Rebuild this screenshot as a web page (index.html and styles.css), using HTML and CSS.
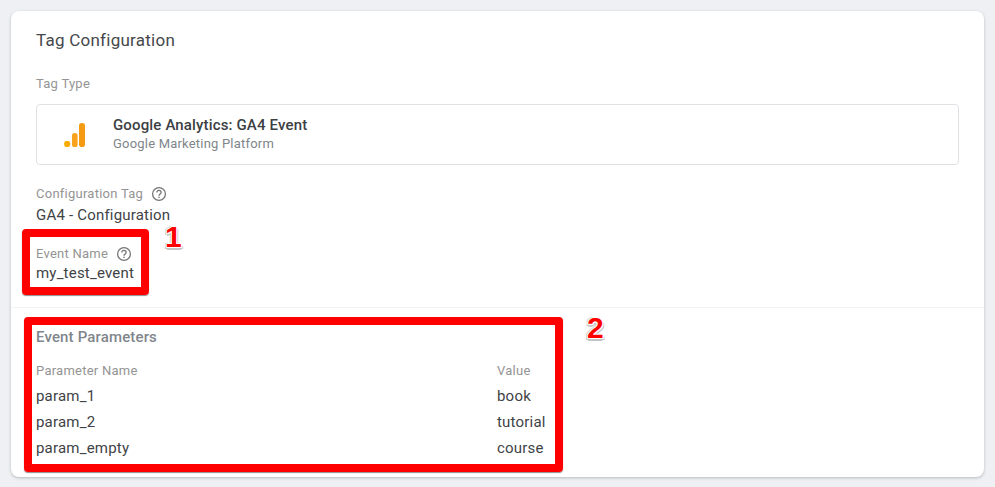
FILE: index.html
```html
<!DOCTYPE html>
<html lang="en">
<head>
<meta charset="utf-8">
<title>Tag Configuration</title>
<link rel="stylesheet" href="styles.css">
</head>
<body>
<main class="card">
  <section class="top">
    <h1 class="title">Tag Configuration</h1>
    <div class="label type-label">Tag Type</div>
    <div class="type-box">
      <svg class="ga-icon" viewBox="0 0 24 24" width="24" height="24" aria-hidden="true">
        <rect x="1.2" y="18" width="6" height="6" rx="2.2" fill="#f9ab00"/>
        <rect x="9" y="10" width="5.6" height="14" rx="2.6" fill="#f9a21b"/>
        <rect x="16" y="0" width="6" height="24" rx="2.8" fill="#f59a13"/>
      </svg>
      <div class="type-text">
        <div class="type-name">Google Analytics: GA4 Event</div>
        <div class="type-sub">Google Marketing Platform</div>
      </div>
    </div>
    <div class="label help-row config-label">Configuration Tag
      <svg class="help" viewBox="0 0 24 24" aria-hidden="true"><circle cx="12" cy="12" r="9.6" fill="none" stroke="#757575" stroke-width="1.9"/><path d="M8.8 9.6a3.2 3.2 0 0 1 6.4 0c0 2.3-3.2 2.5-3.2 5" fill="none" stroke="#757575" stroke-width="1.9"/><rect x="11" y="16" width="2" height="2" fill="#757575"/></svg>
    </div>
    <div class="value">GA4 - Configuration</div>
    <div class="label help-row event-label">Event Name
      <svg class="help" viewBox="0 0 24 24" aria-hidden="true"><circle cx="12" cy="12" r="9.6" fill="none" stroke="#757575" stroke-width="1.9"/><path d="M8.8 9.6a3.2 3.2 0 0 1 6.4 0c0 2.3-3.2 2.5-3.2 5" fill="none" stroke="#757575" stroke-width="1.9"/><rect x="11" y="16" width="2" height="2" fill="#757575"/></svg>
    </div>
    <div class="value">my_test_event</div>
  </section>
  <section class="params">
    <h2 class="params-title">Event Parameters</h2>
    <div class="param-grid">
      <div class="label">Parameter Name</div><div class="label">Value</div>
      <div class="value">param_1</div><div class="value">book</div>
      <div class="value">param_2</div><div class="value">tutorial</div>
      <div class="value">param_empty</div><div class="value">course</div>
    </div>
  </section>
</main>
<div class="mark mark-one"></div>
<div class="mark mark-two"></div>
<div class="num num-one">1</div>
<div class="num num-two">2</div>
</body>
</html>
```
FILE: styles.css
```css
* { box-sizing: border-box; }
html, body { height: 100%; }
body {
  margin: 0;
  padding: 11px 11px 10px;
  background: #eef0f3;
  font-family: Roboto, "Liberation Sans", sans-serif;
  overflow: hidden;
}
.card {
  width: 973px;
  height: 466px;
  background: #fff;
  border-radius: 8px;
  box-shadow: 0 1px 3px rgba(60, 64, 67, 0.3);
  display: flex;
  flex-direction: column;
}
.top {
  height: 297px;
  padding: 19px 25px 0;
  border-bottom: 1px solid #f3f3f3;
}
.title {
  margin: 0;
  font-size: 17px;
  line-height: 20px;
  font-weight: 400;
  letter-spacing: 0.25px;
  color: #45484b;
}
.label {
  font-size: 13px;
  line-height: 16px;
  letter-spacing: 0.25px;
  color: #949494;
}
.type-label { margin-top: 26px; }
.type-box {
  margin-top: 12px;
  width: 923px;
  height: 61px;
  border: 1px solid #dfe1e5;
  border-radius: 4px;
  display: flex;
  align-items: center;
  padding-left: 26px;
  gap: 26px;
}
.ga-icon { flex: none; }
.type-text { padding-bottom: 2px; }
.type-name {
  font-size: 15px;
  line-height: 18px;
  margin-bottom: 2px;
  font-weight: 500;
  letter-spacing: 0.15px;
  color: #3c4043;
}
.type-sub {
  font-size: 13px;
  line-height: 16px;
  letter-spacing: 0.2px;
  color: #80868b;
}
.help-row { display: flex; align-items: center; gap: 8px; }
.help { width: 16px; height: 16px; flex: none; }
.config-label { margin-top: 21px; gap: 8px; }
.event-label { margin-top: 21px; gap: 8px; }
.value {
  font-size: 15px;
  line-height: 20px;
  letter-spacing: 0.2px;
  color: #404346;
}
.config-label + .value { margin-top: 3px; }
.event-label + .value { margin-top: 1px; }
.params { padding: 20px 25px 0; }
.params-title {
  margin: 0;
  font-size: 15px;
  line-height: 18px;
  font-weight: 500;
  letter-spacing: 0.15px;
  color: #80868b;
}
.param-grid {
  margin-top: 13px;
  display: grid;
  grid-template-columns: 461px 1fr;
  grid-template-rows: 24px;
  grid-auto-rows: 26px;
  align-items: center;
}
.mark {
  position: absolute;
  border: 8px solid #ff0000;
  border-radius: 4px;
  box-shadow: 0 1px 1px rgba(0, 0, 0, 0.45);
}
.mark-one { left: 22px; top: 229px; width: 127px; height: 66px; }
.mark-two { left: 24px; top: 317px; width: 539px; height: 155px; }
.num {
  position: absolute;
  font-family: "Liberation Sans", Arial, sans-serif;
  font-weight: 700;
  font-size: 30px;
  line-height: 30px;
  color: #ff0000;
  text-shadow:
    1px 0 0 #fff, -1px 0 0 #fff, 0 1px 0 #fff, 0 -1px 0 #fff,
    1px 1px 0 #fff, -1px 1px 0 #fff,
    0 3px 0 #c4c4c4, 2px 2px 0 #c8c8c8, -2px 2px 0 #c8c8c8, -2px -1px 0 #d8d8d8;
}
.num-one { left: 165px; top: 222px; }
.num-two { left: 587px; top: 313px; }
```
